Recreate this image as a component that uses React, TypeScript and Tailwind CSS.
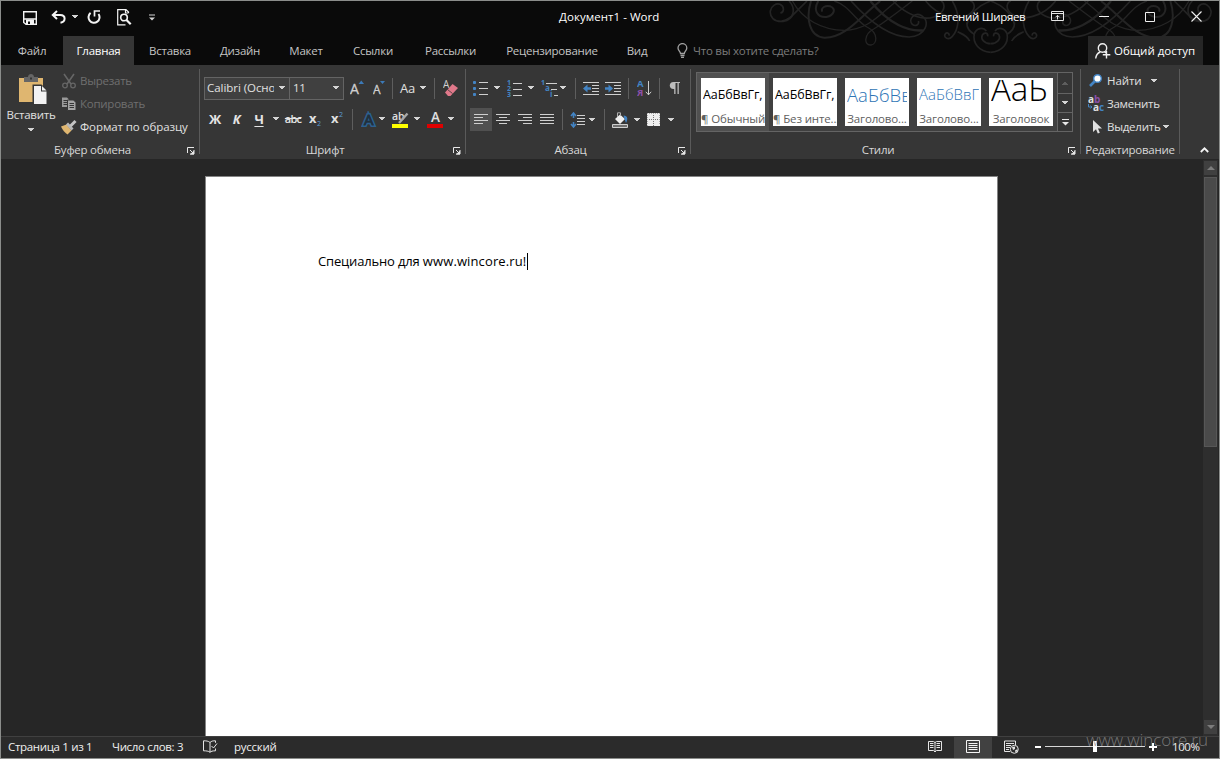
import React from 'react';
import clsx from 'clsx';

type KidsProps = { children?: React.ReactNode; className?: string };

const Caret = ({ className }: { className?: string }) => (
  <svg width="6" height="4" viewBox="0 0 6 4" className={clsx('shrink-0', className)} shapeRendering="crispEdges">
    <path d="M0 0h6L3 3.5z" fill="#d4d4d4" />
  </svg>
);

const Icon = ({ w = 16, h = 16, className, children }: KidsProps & { w?: number; h?: number }) => (
  <svg width={w} height={h} viewBox={`0 0 ${w} ${h}`} className={clsx('shrink-0 tracking-normal', className)} fill="none">
    {children}
  </svg>
);

const Sep = ({ className }: { className?: string }) => (
  <div className={clsx('w-px h-[21px] bg-[#5e5e5e] shrink-0', className)} />
);

const Launcher = () => (
  <Icon w={9} h={9} className="mr-[4px] mt-px">
    <path d="M1.5 7V1.5H8M4 4l3 3M8 4v4H4" stroke="#e8e8e8" />
    <path d="M8 4.500V8.500H4z" fill="#e8e8e8" />
  </Icon>
);

/* One ribbon group: body, caption and the divider on its right */
const Group = ({ label, launcher = true, width, children }: KidsProps & { label: string; launcher?: boolean; width: string }) => (
  <>
    <section className={clsx('flex flex-col shrink-0', width)}>
      <div className="h-[76px]">{children}</div>
      <div className="flex h-[18px] items-center">
        <div className={clsx('flex-1 text-center text-[#d8d8d8]', launcher && 'pl-[2px]')}>{label}</div>
        {launcher && <div className="flex w-[17px] justify-end"><Launcher /></div>}
      </div>
    </section>
    <div className="w-px h-[85px] mt-1 bg-[#5a5a5a] shrink-0" />
  </>
);

const Swirls = () => (
  <svg width="480" height="54" viewBox="0 0 1440 162" className="absolute right-0 top-0" fill="none" stroke="#242424" strokeWidth="5">
    <defs>
      <g id="half">
        <path d="M150 0C170 20 168 56 132 61C104 64 92 46 94 30C97 14 112 6 123 10C137 16 136 34 124 36" />
        <path d="M128 60C152 58 164 38 190 14L204 0" />
        <path d="M160 0C190 55 250 88 316 88C390 86 420 40 474 0" strokeWidth="4" />
        <path d="M216 0C200 50 210 108 256 110C320 112 366 44 424 0" strokeWidth="6" />
        <path d="M238 0C220 30 238 50 262 48C286 44 292 22 274 16C260 12 244 20 250 32" strokeWidth="6" />
        <path d="M286 0C330 12 350 60 384 78C420 96 414 130 396 132C374 134 374 100 404 84C440 62 480 30 520 0" strokeWidth="4" />
        <path d="M336 0C390 60 450 108 510 108C560 106 576 60 548 44C526 32 506 56 520 70C530 78 542 70 538 60" />
        <path d="M394 0C450 70 510 92 552 88" strokeWidth="7" />
        <path d="M462 0C500 40 560 68 600 40C622 24 616 4 606 0" />
        <path d="M560 0C600 50 660 60 690 40C716 22 704 2 694 0" />
        <path d="M755 154C720 152 700 126 706 98C712 82 732 76 742 90M755 128C736 128 724 114 730 102C736 92 748 96 746 106" />
        <path d="M640 0C670 50 654 92 640 106C628 120 614 110 618 100C622 92 632 96 630 104M656 92C660 96 682 100 692 120" />
        <path d="M684 70C690 40 720 12 755 0M706 100C690 90 682 76 684 64" />
      </g>
    </defs>
    <use href="#half" />
    <use href="#half" transform="translate(1510 0) scale(-1 1)" />
  </svg>
);

const TitleBar = () => (
  <header className="relative flex h-[35px] items-center pb-[4px] text-white">
    <Icon w={14} h={14} className="mt-[2px] ml-[22px]">
      <path d="M.7.7h12.6v12.6H3L.7 11.5zM.7 8h12.6" stroke="#f4f4f4" strokeWidth="1.4" />
      <path d="M3 8.5h8V14H3z" fill="#f4f4f4" />
      <path d="M5 10.5h2V13H5z" fill="#0a0a0a" />
    </Icon>
    <Icon w={15} h={14} className="mt-px ml-[14px]">
      <path d="M6 1L1.8 5L6 9M2 5h7.2c3 0 4.4 1.6 4.4 3.6S12 12.4 9.5 12.8" stroke="#f4f4f4" strokeWidth="2" />
    </Icon>
    <Caret className="mt-px ml-[6px]" />
    <Icon w={14} h={14} className="mt-px ml-[9px]">
      <path d="M3.600 2.900A5.500 5.500 0 1 0 11.500 4" stroke="#f4f4f4" strokeWidth="2" />
      <path d="M13 1H7.500v5.500" stroke="#f4f4f4" strokeWidth="1.700" />
    </Icon>
    <Icon w={15} h={17} className="mt-[2px] ml-[16px]">
      <path d="M11.5 4V3L9 .7H.7v15.1h7.8M8.5 1v3h3" stroke="#f4f4f4" strokeWidth="1.2" />
      <circle cx="7" cy="8.5" r="3.3" stroke="#f4f4f4" strokeWidth="1.6" />
      <path d="M9.5 11l4.2 4.2" stroke="#f4f4f4" strokeWidth="2.2" />
    </Icon>
    <Icon w={6} h={7} className="mt-[2px] ml-[17px]">
      <path d="M0 1h6" stroke="#d4d4d4" />
      <path d="M0 3.500h6L3 6.500z" fill="#d4d4d4" />
    </Icon>
    <div className="ml-[404px] w-[110px] tracking-[0.05px] whitespace-nowrap">Документ1 - Word</div>
    <div className="ml-[266px] w-[116px] tracking-[-0.33px] whitespace-nowrap">Евгений Ширяев</div>
    <Icon w={13} h={11}>
      <path d="M.5.5h12v9H.5zM.5 2.5h12M6.5 8.5V4.5M4.5 6.3l2-2l2 2" stroke="#e8e8e8" />
    </Icon>
    <Icon w={10} h={1} className="ml-[35px]">
      <path d="M0 .5h10" stroke="#f0f0f0" />
    </Icon>
    <Icon w={10} h={10} className="ml-[36px]">
      <path d="M.5.5h9v9h-9z" stroke="#f0f0f0" />
    </Icon>
    <Icon w={11} h={11} className="ml-[36px]">
      <path d="M.5.5l10 10M10.5.5l-10 10" stroke="#f0f0f0" strokeWidth="1.1" />
    </Icon>
  </header>
);

const tabs = [
  { name: 'Файл', width: 'w-[62px]' },
  { name: 'Главная', width: 'w-[71px]', active: true },
  { name: 'Вставка', width: 'w-[72px]' },
  { name: 'Дизайн', width: 'w-[68px]' },
  { name: 'Макет', width: 'w-[64px]' },
  { name: 'Ссылки', width: 'w-[70px]' },
  { name: 'Рассылки', width: 'w-[85px]' },
  { name: 'Рецензирование', width: 'w-[118px]' },
  { name: 'Вид', width: 'w-[52px]' },
];

const Tabs = () => (
  <nav className="relative flex h-[29px] text-[#c4c4c4]">
    {tabs.map((tab) => (
      <div
        key={tab.name}
        className={clsx('flex items-center justify-center whitespace-nowrap', tab.width, tab.active && 'bg-[#363636] text-white')}
      >
        {tab.name}
      </div>
    ))}
    <div className="ml-[14px] flex w-[411px] items-center text-[#7c7c7c]">
      <Icon w={11} h={15}>
        <path d="M3.500 10.500C3.500 8.500 1 7.500 1 5a4.300 4.300 0 0 1 8.800 0c0 2.500-2.500 3.500-2.500 5.500zM3.500 12.500h4M4 14.300h3" stroke="#a0a0a0" strokeWidth="1.300" />
      </Icon>
      <span className="ml-[5px]">Что вы хотите сделать?</span>
    </div>
    <div className="flex w-[115px] items-center bg-[#262626] text-white">
      <Icon w={16} h={16} className="ml-[7px]">
        <circle cx="7.500" cy="5" r="4.200" stroke="#f0f0f0" strokeWidth="1.400" />
        <path d="M.7 15.500c.3-3.500 2-5.500 4.500-6.500M9.500 8.800l1.500 1M11.500 8v7.500M7.800 11.800h7.500" stroke="#f0f0f0" strokeWidth="1.400" />
      </Icon>
      <span className="ml-[3px] tracking-normal whitespace-nowrap">Общий доступ</span>
    </div>
  </nav>
);

const ClipboardGroup = () => (
  <Group label="Буфер обмена" width="w-[198px]">
    <div className="flex">
      <div className="flex w-[60px] flex-col items-center pt-[9px]">
        <Icon w={28} h={31} className="ml-[3px]">
          <path d="M0 4h24v24H0z" fill="#dfb670" />
          <path d="M5 3h4c0-4 6-4 6 0h4v5H5z" fill="#666" />
          <path d="M11 3.500h2v2h-2z" fill="#363636" />
          <path d="M13.500 10.500h9l6 6v15h-15z" fill="#363636" />
          <path d="M15 12h7v5.500h5.500V30H15z" fill="#f2f2f2" />
          <path d="M23 12l4.500 4.500H23z" fill="#f2f2f2" />
        </Icon>
        <div className="mt-[2px] whitespace-nowrap">Вставить</div>
        <Caret className="mt-[5px]" />
      </div>
      <div className="flex flex-col pt-1 text-[#6f6f6f]">
        <div className="flex h-[23px] items-center">
          <Icon>
            <path d="M3 1l7 10M13 1L6 11" stroke="#666" strokeWidth="1.600" />
            <circle cx="4" cy="12.500" r="2.300" stroke="#666" strokeWidth="1.300" />
            <circle cx="12" cy="12.500" r="2.300" stroke="#666" strokeWidth="1.300" />
          </Icon>
          <span className="ml-[3px]">Вырезать</span>
        </div>
        <div className="flex h-[23px] items-center">
          <Icon>
            <path d="M1 1.500h5l2 2v7.500H1z" fill="#999" />
            <path d="M2.500 4.500h4M2.500 6.500h4M2.500 8.500h4" stroke="#363636" />
            <path d="M6.500 4h6l2.500 2.500V14.500H6.500z" fill="#a4a4a4" stroke="#363636" />
            <path d="M8.500 7.500h4.500M8.500 9.500h4.500M8.500 11.500h4.500" stroke="#363636" />
          </Icon>
          <span className="ml-[3px]">Копировать</span>
        </div>
        <div className="flex h-[23px] items-center text-[#e0e0e0]">
          <Icon>
            <path d="M0 7.500l5.500-2l5 6l-4 4c-2.500-1.500-5-4.500-6.500-8z" fill="#dfb670" />
            <path d="M6 4.500l5.500 6" stroke="#b8b8b8" strokeWidth="2.800" />
            <path d="M9.500 7l5-5" stroke="#c4c4c4" strokeWidth="3" />
          </Icon>
          <span className="ml-[3px] tracking-[-0.08px] whitespace-nowrap">Формат по образцу</span>
        </div>
      </div>
    </div>
  </Group>
);

const FontGroup = () => (
  <Group label="Шрифт" width="w-[265px]">
    <div className="flex h-[46px] items-center pl-1">
      <div className="flex h-[23px] w-[86px] items-center justify-between border border-[#646464] bg-[#404040] pr-1 pl-[2px]">
        <span className="w-[67px] overflow-hidden tracking-[-0.05px] whitespace-nowrap">Calibri (Основной)</span>
        <Caret />
      </div>
      <div className="-ml-px flex h-[23px] w-[55px] items-center justify-between border border-[#646464] bg-[#404040] pr-1 pl-[3px]">
        <span>11</span>
        <Caret />
      </div>
      <Icon w={15} h={18} className="ml-[6px]">
        <text x="0" y="15" fontSize="14" fill="#d0d0d0" stroke="#d0d0d0" strokeWidth=".3">A</text>
        <path d="M8.500 5l2.800-3.500L14 5z" fill="#3c7ab8" />
      </Icon>
      <Icon w={15} h={18} className="ml-[8px]">
        <text x="0" y="15" fontSize="12" fill="#d0d0d0" stroke="#d0d0d0" strokeWidth=".3">A</text>
        <path d="M7 2l2.500 3L12 2z" fill="#3c7ab8" />
      </Icon>
      <Sep className="ml-[4px]" />
      <span className="ml-[7px] w-[17px] text-[13px]">Aa</span>
      <Caret className="ml-[3px]" />
      <Sep className="ml-[8px]" />
      <Icon w={17} h={17} className="ml-[8px]">
        <text x="0" y="8" fontSize="10" fill="#d0d0d0">A</text>
        <path d="M2 12.500l7.500-8.500l5.500 4l-7.500 8H5z" fill="#e0788a" />
        <path d="M4.500 9.500l5 4" stroke="#363636" strokeWidth=".8" />
      </Icon>
    </div>
    <div className="flex h-[16px] items-center pl-1 text-[#e4e4e4]">
      <b className="w-[22px] text-center text-[13px]">Ж</b>
      <b className="w-[22px] pr-px text-center text-[13px] italic">К</b>
      <b className="w-[22px] text-center text-[13px] underline underline-offset-2">Ч</b>
      <Caret className="ml-[3px]" />
      <span className="ml-[3px] w-[22px] text-center text-[11px] font-semibold tracking-[-0.8px] line-through">abc</span>
      <Icon w={16} h={16} className="ml-[5px]">
        <text x="0" y="12" fontSize="13" fontWeight="700" fill="#e0e0e0">x</text>
        <text x="8" y="15" fontSize="7" fill="#5b9bd5">2</text>
      </Icon>
      <Icon w={16} h={16} className="ml-[6px]">
        <text x="0" y="12" fontSize="13" fontWeight="700" fill="#e0e0e0">x</text>
        <text x="8" y="6" fontSize="7" fill="#5b9bd5">2</text>
      </Icon>
      <Sep className="ml-[5px]" />
      <Icon w={16} h={17} className="ml-[8px]">
        <text x="3" y="14" fontSize="15" fill="#2b4157" stroke="#2c608f" strokeWidth="4" paintOrder="stroke">A</text>
        <text x="3" y="14" fontSize="15" fill="#22303d" stroke="#22303d" strokeWidth=".8">A</text>
      </Icon>
      <Caret className="ml-[2px]" />
      <Icon w={17} h={17} className="ml-[7px]">
        <text x="0" y="9" fontSize="10.500" fontWeight="600" fill="#e0e0e0">ab</text>
        <path d="M15.500 2.500L7 12" stroke="#a8a8a8" strokeWidth="2.400" />
        <path d="M0 13h16v4H0z" fill="#ffff00" />
      </Icon>
      <Caret className="ml-[5px]" />
      <Icon w={17} h={17} className="ml-[7px]">
        <text x="4" y="11" fontSize="13.500" fontWeight="600" fill="#e0e0e0">A</text>
        <path d="M0 13h16v4H0z" fill="#e00000" />
      </Icon>
      <Caret className="ml-[4px]" />
    </div>
  </Group>
);

const lines = '#cfcfcf';

const ParagraphGroup = () => (
  <Group label="Абзац" width="w-[224px]">
    <div className="flex h-[43px] items-center pt-[3px] pl-[7px]">
      <Icon w={15} h={16}>
        <path d="M1.500 1v3M0 2.500h3M1.500 7v3M0 8.500h3M1.500 13v3M0 14.500h3" stroke="#4384c4" strokeWidth="2.200" />
        <path d="M6 2.500h9M6 8.500h9M6 14.500h9" stroke={lines} />
      </Icon>
      <Caret className="ml-[6px]" />
      <Icon w={16} h={17} className="ml-[7px]">
        <text x="0" y="5" fontSize="7" fontWeight="700" fill="#4384c4">1</text>
        <text x="0" y="11" fontSize="7" fontWeight="700" fill="#4384c4">2</text>
        <text x="0" y="17" fontSize="7" fontWeight="700" fill="#4384c4">3</text>
        <path d="M6 3.500h9M6 9.500h9M6 15.500h9" stroke={lines} />
      </Icon>
      <Caret className="ml-[5px]" />
      <Icon w={17} h={17} className="ml-[7px]">
        <text x="0" y="5" fontSize="7" fontWeight="700" fill="#4384c4">1</text>
        <text x="4" y="11" fontSize="8" fontWeight="700" fill="#4384c4">a</text>
        <text x="9" y="17" fontSize="8" fontWeight="700" fill="#4384c4">i</text>
        <path d="M5 3.500h11M10 9.500h6M13 15.500h4" stroke={lines} />
      </Icon>
      <Caret className="ml-[2px]" />
      <Sep className="ml-[9px]" />
      <Icon w={16} h={16} className="ml-[7px]">
        <path d="M0 2.500h16M9 5.500h7M9 8.500h7M9 11.500h7M0 14.500h16" stroke={lines} />
        <path d="M0 8.500L4.500 4.500V7.300H8V9.700H4.500V12.500z" fill="#4384c4" />
      </Icon>
      <Icon w={16} h={16} className="ml-[6px]">
        <path d="M0 2.500h16M9 5.500h7M9 8.500h7M9 11.500h7M0 14.500h16" stroke={lines} />
        <path d="M8 8.500L3.500 4.500V7.300H0V9.700H3.500V12.500z" fill="#4384c4" />
      </Icon>
      <Sep className="ml-[7px]" />
      <Icon w={15} h={17} className="ml-[8px]">
        <text x="0" y="7" fontSize="9.500" fontWeight="700" fill="#4384c4">А</text>
        <text x="0" y="16" fontSize="9.500" fontWeight="700" fill="#8c4fa8">Я</text>
        <path d="M11.500 1v14M8.800 11.800L11.500 14.800L14.200 11.800" stroke={lines} />
      </Icon>
      <Sep className="ml-[7px]" />
      <Icon w={12} h={14} className="ml-[9px]">
        <path d="M4.500 8C-.5 8-.5 1 4.500 1H11v1H9.800v11H8.500V2H6.500v11H5.200V8z" fill="#bdbdbd" />
      </Icon>
    </div>
    <div className="flex h-[23px] items-center pl-1">
      <div className="flex h-[23px] w-[22px] items-center justify-center bg-[#505050]">
        <Icon w={14} h={11}>
          <path d="M0 .5h14M0 3.500h9M0 6.500h14M0 9.500h9" stroke={lines} />
        </Icon>
      </div>
      <Icon w={14} h={11} className="ml-[4px]">
        <path d="M0 .5h14M3 3.500h8M0 6.500h14M3 9.500h8" stroke={lines} />
      </Icon>
      <Icon w={14} h={11} className="ml-[8px]">
        <path d="M0 .5h14M5 3.500h9M0 6.500h14M5 9.500h9" stroke={lines} />
      </Icon>
      <Icon w={14} h={11} className="ml-[8px]">
        <path d="M0 .5h14M0 3.500h14M0 6.500h14M0 9.500h14" stroke={lines} />
      </Icon>
      <Sep className="ml-[8px]" />
      <Icon w={15} h={16} className="ml-[7px]">
        <path d="M3.500 1v5M3.500 10v5M1 4l2.500-3L6 4M1 12l2.500 3L6 12" stroke="#4384c4" strokeWidth="1.600" />
        <path d="M7 3.500h8M7 6.500h8M7 9.500h8M7 12.500h8" stroke={lines} />
      </Icon>
      <Caret className="ml-[4px]" />
      <Sep className="ml-[9px]" />
      <Icon w={17} h={16} className="ml-[7px]">
        <path d="M3 7l5-4.500l5 4.500l-5 5z" fill="#efefef" />
        <path d="M5.500 5V.8h3V4" stroke="#b0b0b0" />
        <path d="M11.500 3.500c4.500 0 4.500 4 2.500 7.500l-1.500-4z" fill="#4384c4" />
        <path d="M.5 12.500h15v3H.5z" fill="#707070" stroke={lines} />
      </Icon>
      <Caret className="ml-[5px]" />
      <Icon w={13} h={13} className="ml-[7px]">
        <path d="M0 0h13v13H0z" fill="#efefef" />
        <path d="M0 6.500h13M6.500 0v13" stroke="#777" strokeDasharray="1 1" />
        <path d="M0 .5h13M.5 0v13M12.500 0v12" stroke="#aaa" strokeDasharray="1 1" />
      </Icon>
      <Caret className="ml-[8px]" />
    </div>
  </Group>
);

const styleTiles = [
  { name: '¶ Обычный', sample: 'АаБбВвГг,', look: 'h-[32px] text-[12.5px] tracking-[-0.1px] text-black leading-[33px]' },
  { name: '¶ Без инте...', sample: 'АаБбВвГг,', look: 'h-[32px] text-[12.5px] tracking-[-0.1px] text-black leading-[33px]' },
  { name: 'Заголово...', sample: 'АаБбВв', look: 'h-[32px] text-[18.5px] tracking-[0px] font-light text-[#2e74b5] leading-[33px]' },
  { name: 'Заголово...', sample: 'АаБбВвГ', look: 'h-[32px] text-[15px] tracking-[0px] font-light text-[#2e74b5] leading-[32px]' },
  { name: 'Заголовок', sample: 'АаБ', look: 'mt-[2px] h-[30px] text-[33px] tracking-[0px] font-light text-black leading-[18px]' },
];

const StylesGroup = () => (
  <Group label="Стили" width="w-[389px]">
    <div className="pt-[7px] pl-[5px]">
      <div className="flex h-[60px] w-[377px] border border-[#646464] bg-[#404040]">
        <div className="flex flex-1">
          {styleTiles.map((tile, i) => (
            <div key={i} className={clsx('flex h-[58px] w-[72px] shrink-0 items-center justify-center', i === 0 && 'bg-[#505050]')}>
              <div className="flex h-[48px] w-[64px] flex-col overflow-hidden bg-white">
                <div className={clsx('mr-[2px] ml-[2px] shrink-0 overflow-hidden whitespace-nowrap', tile.look)}>{tile.sample}</div>
                <div className="h-[16px] text-center leading-[17px] tracking-[-0.15px] whitespace-nowrap text-[#606060]">{tile.name}</div>
              </div>
            </div>
          ))}
        </div>
        <div className="flex w-[15px] flex-col border-l border-[#646464] bg-[#363636]">
          <div className="flex h-[20px] items-center justify-center opacity-25"><Caret className="rotate-180" /></div>
          <div className="flex h-[19px] items-center justify-center border-t border-[#646464]"><Caret /></div>
          <div className="flex h-[19px] items-center justify-center border-t border-[#646464]">
            <Icon w={7} h={7}>
              <path d="M0 .5h7" stroke="#e8e8e8" />
              <path d="M0 3h7L3.500 6.500z" fill="#e8e8e8" />
            </Icon>
          </div>
        </div>
      </div>
    </div>
  </Group>
);

const EditingGroup = () => (
  <Group label="Редактирование" launcher={false} width="w-[98px]">
    <div className="flex flex-col pt-1 pl-[7px] text-[#e0e0e0]">
      <div className="flex h-[23px] items-center">
        <Icon>
          <path d="M7.500 7.500L2 13" stroke="#4384c4" strokeWidth="2.600" />
          <circle cx="9.500" cy="5.500" r="3.800" fill="#fff" stroke="#4384c4" strokeWidth="1.400" />
        </Icon>
        <span className="ml-[3px] w-[44px] tracking-[-0.1px]">Найти</span>
        <Caret />
      </div>
      <div className="flex h-[23px] items-center">
        <Icon w={17} h={17}>
          <text x="0" y="7.500" fontSize="10" fontWeight="700" fill="#e0e0e0">a</text>
          <text x="6" y="7.500" fontSize="10" fontWeight="700" fill="#8c4fa8">b</text>
          <text x="5" y="15.500" fontSize="10" fontWeight="700" fill="#e0e0e0">a</text>
          <text x="11" y="15.500" fontSize="10" fontWeight="700" fill="#4384c4">c</text>
          <path d="M.5 9v3H4M2.500 10.500L4 12l-1.500 1.500" stroke="#4384c4" />
        </Icon>
        <span className="ml-[2px] tracking-[-0.25px]">Заменить</span>
      </div>
      <div className="flex h-[23px] items-center">
        <Icon>
          <path d="M5 1v12l3-2.800L9.800 14.500l2-.8L10 9.500h4z" fill="#e0e0e0" />
        </Icon>
        <span className="ml-[3px] w-[56px] tracking-[-0.25px]">Выделить</span>
        <Caret />
      </div>
    </div>
  </Group>
);

const Ribbon = () => (
  <div className="flex h-[94px] shrink-0 bg-[#363636] text-[#e0e0e0]">
    <ClipboardGroup />
    <FontGroup />
    <ParagraphGroup />
    <StylesGroup />
    <EditingGroup />
    <div className="flex flex-1 items-end justify-end pr-[10px] pb-[6px]">
      <Icon w={9} h={6}>
        <path d="M.8 5l3.700-3.700L8.200 5" stroke="#f4f4f4" strokeWidth="1.800" />
      </Icon>
    </div>
  </div>
);

const Workspace = () => (
  <main className="flex flex-1 overflow-hidden bg-[#262626]">
    <div className="mt-[17px] ml-[204px] w-[793px] border border-b-0 border-[#848484] bg-white pt-[74px] pl-[112px]">
      <div className="flex h-[20px] items-center text-[13px] tracking-[0px] whitespace-nowrap text-black">
        <p className="w-[209px]">
          <span className="tracking-[-0.16px]">Специально для </span>
          <span className="tracking-[0.12px]">www.wincore.ru!</span>
        </p>
        <div className="h-[17px] w-px bg-black" />
      </div>
    </div>
    <div className="mt-px mr-px ml-auto flex w-[15px] flex-col items-center bg-[#2e2e2e] pb-[2px]">
      <div className="mt-px flex h-[14px] w-[13px] items-center justify-center bg-[#404040]">
        <Icon w={8} h={4}><path d="M0 4l4-4l4 4z" fill="#7c7c7c" /></Icon>
      </div>
      <div className="mt-[2px] h-[270px] w-[13px] border border-[#575757] bg-[#4a4a4a]" />
      <div className="mt-auto flex h-[14px] w-[13px] items-center justify-center bg-[#404040]">
        <Icon w={8} h={4}><path d="M0 0h8L4 4z" fill="#7c7c7c" /></Icon>
      </div>
    </div>
  </main>
);

const StatusBar = () => (
  <footer className="flex h-[22px] shrink-0 items-center border-t border-[#404040] bg-[#2b2b2b] whitespace-nowrap text-[#f0f0f0]">
    <span className="-mt-[2px] ml-[7px] w-[104px] tracking-[-0.33px]">Страница 1 из 1</span>
    <span className="-mt-[2px] w-[91px] tracking-[-0.33px]">Число слов: 3</span>
    <Icon w={15} h={13} className="-mt-[2px]">
      <path d="M7 2.500C5.500 1 3 .8.5.8v10c2.500 0 5 .2 6.500 1.500zM7 2.500C8.500 1 10 .8 12.500.8v2M7 12.300c1-1 2.500-1.500 5.500-1.500V8.500M8.500 6l2 2L14 3.500" stroke="#e4e4e4" />
    </Icon>
    <span className="-mt-[2px] ml-[16px]">русский</span>
    <Icon w={14} h={13} className="-mt-[2px] ml-auto">
      <path d="M.5 1.500h5l1.500 1l1.500-1h5v9h-5l-1.500 1.500l-1.500-1.500h-5zM7 2v10M2 3.500h3.500M2 5.500h3.500M2 7.500h3.500M8.500 3.500H12M8.500 5.500H12M8.500 7.500H12" stroke="#e4e4e4" />
    </Icon>
    <div className="ml-[12px] flex h-full w-[38px] items-center justify-center bg-[#414141] pb-[2px]">
      <Icon w={14} h={13}>
        <path d="M.5.500h13v12H.5zM2.500 3.500h9M2.500 5.500h9M2.500 7.500h9M2.500 9.500h9" stroke="#f4f4f4" />
      </Icon>
    </div>
    <Icon w={15} h={14} className="-mt-[2px] ml-[12px]">
      <path d="M6 11.500H.5V1h11v4M2 3.500h8M2 5.500h5M2 7.500h4M2 9.500h3" stroke="#e4e4e4" />
      <circle cx="10.300" cy="9.300" r="4" fill="#2b2b2b" stroke="#e4e4e4" />
      <path d="M8 7l3-.5v2.500l-2 1zM11 10.500l2.500-1.500v2l-2 1.500z" fill="#e4e4e4" />
    </Icon>
    <div className="-mt-px ml-[16px] h-[2px] w-[6px] bg-white" />
    <div className="-mt-[2px] ml-[4px] flex w-[100px] items-center">
      <div className="h-px w-[48px] bg-[#d8d8d8]" />
      <div className="h-[11px] w-[4px] bg-white" />
      <div className="h-px flex-1 bg-[#d8d8d8]" />
    </div>
    <Icon w={8} h={8} className="-mt-px ml-[4px]">
      <path d="M0 4h8M4 0v8" stroke="#fff" strokeWidth="2" />
    </Icon>
    <span className="-mt-[2px] ml-[15px] w-[47px] tracking-[-0.4px]">100%</span>
  </footer>
);

export default function App() {
  return (
    <div className="relative flex h-[759px] w-[1220px] flex-col overflow-hidden border border-[#8b8d8b] bg-[#0a0a0a] font-['Open_Sans','Noto_Sans',sans-serif] text-[11.5px] leading-[16px] tracking-[-0.25px]">
      <Swirls />
      <TitleBar />
      <Tabs />
      <Ribbon />
      <Workspace />
      <StatusBar />
      <div className="absolute right-[11px] bottom-[6px] text-[17px] leading-[24px] font-light tracking-normal text-[#8a8a8a]/80">www.wincore.ru</div>
    </div>
  );
}
